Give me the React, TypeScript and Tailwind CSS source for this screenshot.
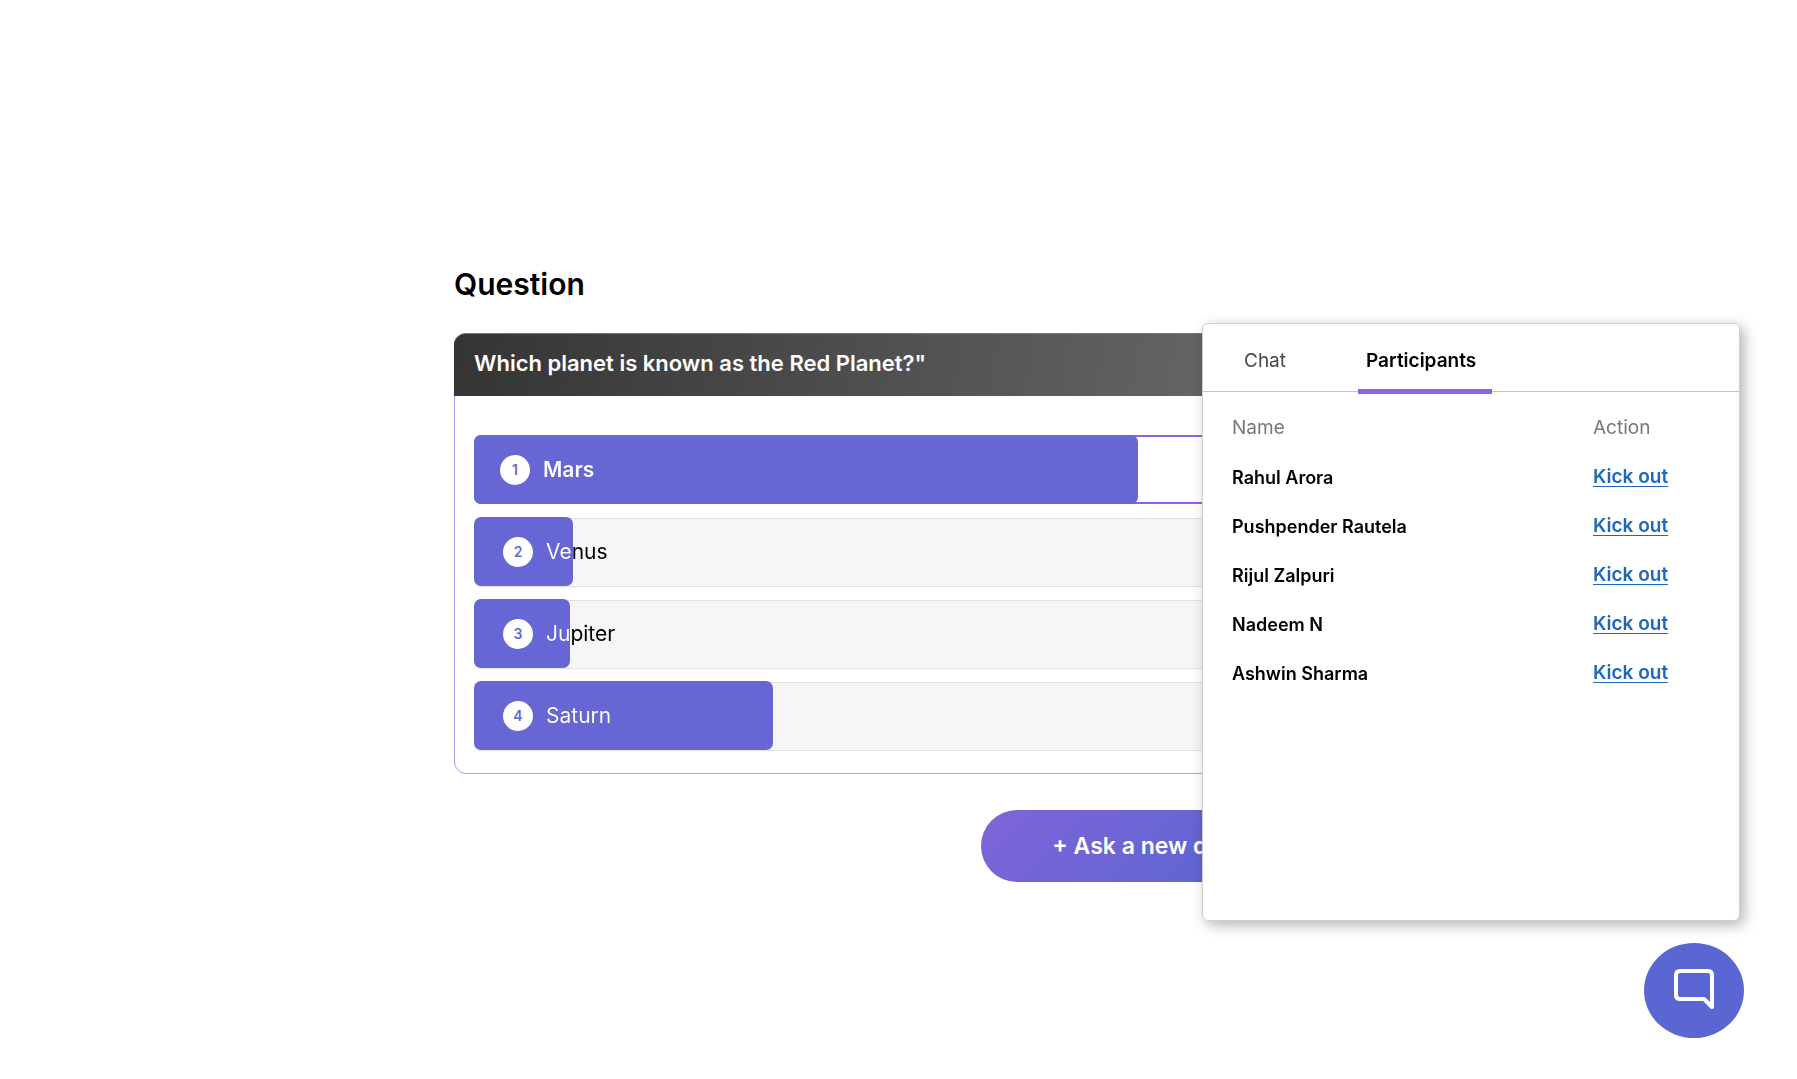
import { useState } from "react";

const options = [
  { label: "Mars", share: 76.6, correct: true },
  { label: "Venus", share: 11.4, correct: false },
  { label: "Jupiter", share: 11.1, correct: false },
  { label: "Saturn", share: 34.5, correct: false },
];

const participants = [
  "Rahul Arora",
  "Pushpender Rautela",
  "Rijul Zalpuri",
  "Nadeem N",
  "Ashwin Sharma",
];

type OptionProps = { index: number; label: string; share: number; correct: boolean };

function OptionRow({ index, label, share, correct }: OptionProps) {
  return (
    <li className="relative h-[69px]">
      <div
        className={
          correct
            ? "absolute inset-0 rounded-[7px] border-2 border-[#8f64e1] bg-white"
            : "absolute inset-x-0 top-px -bottom-px rounded-[7px] border border-[#e2e2e2] bg-[#f6f6f6]"
        }
      />
      <div
        className="absolute inset-y-0 left-0 rounded-[7px] bg-[#6766d5]"
        style={{ width: `${share}%` }}
      />
      <div
        className={
          correct
            ? "relative flex h-full items-center gap-[13px] bg-clip-text pl-[26px] text-[21px] font-semibold text-transparent"
            : "relative flex h-full items-center gap-[13px] bg-clip-text pl-[29px] pt-px text-[21px] text-transparent"
        }
        style={{
          backgroundImage: `linear-gradient(90deg, #ffffff ${share}%, #000000 ${share}%)`,
        }}
      >
        <span className="flex size-[30px] items-center justify-center rounded-full bg-white text-sm font-semibold text-[#6766d5]">
          {index}
        </span>
        <span>{label}</span>
      </div>
    </li>
  );
}

export default function App() {
  const [tab, setTab] = useState("participants");
  const [open, setOpen] = useState(true);

  return (
    <div className="min-h-screen bg-white font-['Inter',sans-serif] text-black">
      <main className="grid grid-cols-[454fr_907fr_436fr] pt-[264px]">
        <section className="col-start-2">
          <h1 className="text-[30px] font-semibold leading-10">Question</h1>
          <div className="mt-[29px] rounded-xl border border-[#b998f3]">
            <h2 className="-mx-px -mt-px flex h-[63px] items-center rounded-t-xl border-t border-[#77758a] bg-linear-[100deg] from-[#343434] to-[#6e6e6e] pb-1 pl-5 text-[22px] font-semibold text-white">
              Which planet is known as the Red Planet?&quot;
            </h2>
            <ol className="flex flex-col gap-[13px] px-[19px] pb-[23px] pt-[39px]">
              {options.map((o, i) => (
                <OptionRow key={o.label} index={i + 1} {...o} />
              ))}
            </ol>
          </div>
          <div className="mt-9 flex justify-end">
            <button
              type="button"
              className="h-[72px] rounded-full bg-linear-[135deg] from-[#8064d9] to-[#4f66d0] px-[71px] text-[23px] font-semibold text-white"
            >
              + Ask a new question
            </button>
          </div>
        </section>
      </main>

      <div className="fixed bottom-[41px] right-[53px] flex flex-col items-end gap-[22px]">
        {open && (
          <aside className="mr-1 min-h-[598px] w-[538px] rounded-md border border-[#cfcfcf] bg-white shadow-[4px_4px_14px_rgba(0,0,0,0.3)]">
            <div role="tablist" className="flex h-[68px] border-b border-[#c4c4c4] pl-[18px]">
              <button
                type="button"
                role="tab"
                aria-selected={tab === "chat"}
                onClick={() => setTab("chat")}
                className="w-[88px] pt-[7px] text-[19px] text-[#474747]"
              >
                Chat
              </button>
              <button
                type="button"
                role="tab"
                aria-selected={tab === "participants"}
                onClick={() => setTab("participants")}
                className="-mb-[3px] ml-[49px] w-[134px] border-b-[5px] border-[#8f64e1] pl-2 pt-[9px] text-left text-[19px] font-semibold"
              >
                Participants
              </button>
            </div>
            <table className="mt-3 w-full table-fixed text-left">
              <thead>
                <tr className="h-[49px] text-[19px] text-[#777777]">
                  <th scope="col" className="w-[390px] pl-[29px] font-normal">
                    Name
                  </th>
                  <th scope="col" className="font-normal">
                    Action
                  </th>
                </tr>
              </thead>
              <tbody>
                {participants.map((name) => (
                  <tr key={name} className="h-[49px] font-semibold">
                    <td className="pl-[29px] text-lg">{name}</td>
                    <td className="text-[19px]">
                      <a
                        href="#kick"
                        className="text-[#1d68bd] underline decoration-1 underline-offset-3"
                      >
                        Kick out
                      </a>
                    </td>
                  </tr>
                ))}
              </tbody>
            </table>
          </aside>
        )}
        <button
          type="button"
          aria-label="Toggle chat"
          onClick={() => setOpen(!open)}
          className="flex h-[95px] w-[100px] items-center justify-center rounded-[50%] bg-[#5a66d1] pb-1"
        >
          <svg
            width="42"
            height="42"
            viewBox="0 0 42 42"
            fill="none"
            stroke="white"
            strokeWidth="4"
            strokeLinejoin="round"
            aria-hidden="true"
          >
            <path d="M39 39 L31 31 H7 Q3 31 3 27 V7 Q3 3 7 3 H35 Q39 3 39 7 Z" />
          </svg>
        </button>
      </div>
    </div>
  );
}
